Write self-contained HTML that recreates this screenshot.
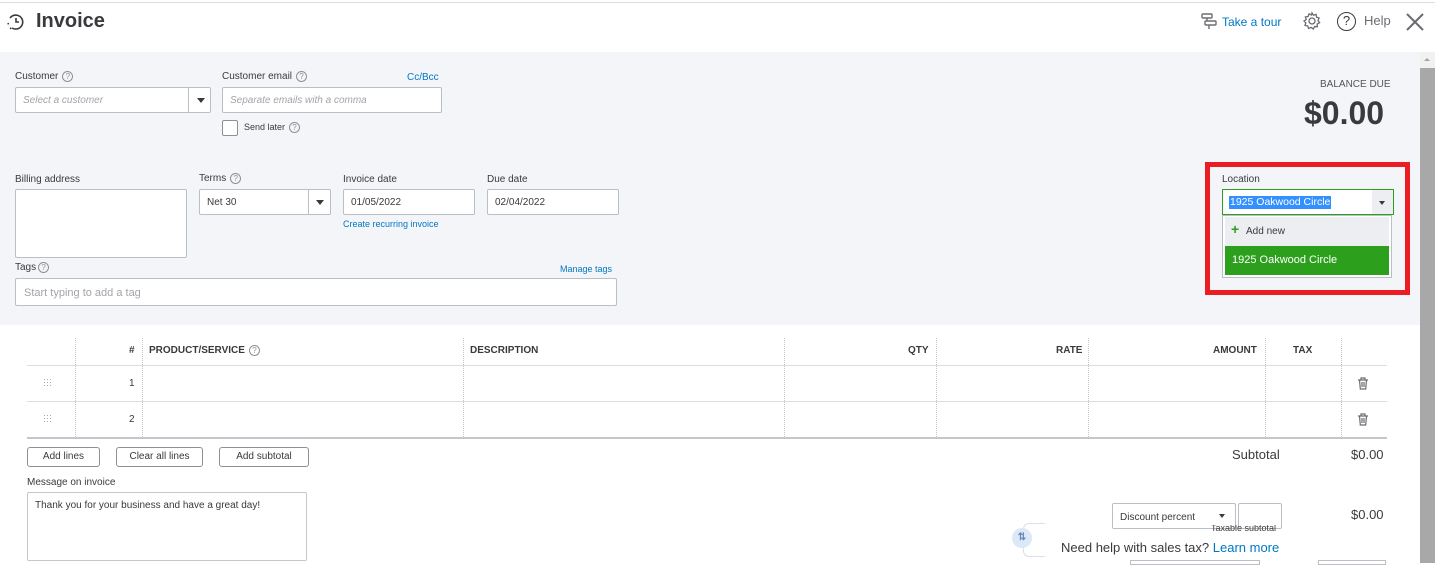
<!DOCTYPE html>
<html><head><meta charset="utf-8"><style>
*{box-sizing:border-box;margin:0;padding:0}
body{width:1435px;height:563px;overflow:hidden;background:#fff;font-family:"Liberation Sans",Arial,sans-serif;color:#393a3d;position:relative}
.a{position:absolute}
.lbl{font-size:10px;color:#393a3d}
.in{position:absolute;background:#fff;border:1px solid #babec5;border-radius:2px;font-size:10px}
.ph{color:#a0a4aa;font-style:italic}
.q{display:inline-block;width:11px;height:11px;border:1px solid #8d9096;border-radius:50%;font-size:8px;line-height:9px;text-align:center;color:#8d9096;vertical-align:middle;margin-left:4px}
.blue{color:#0077c5}
.th{position:absolute;top:345px;font-size:10px;font-weight:bold;color:#393a3d}
.vl{position:absolute;top:338px;height:99px;border-left:1px dotted #c4c6ca}
.btn{position:absolute;top:447px;height:20px;border:1px solid #8d9096;border-radius:3px;background:#fff;font-size:10px;text-align:center;line-height:18px}
</style></head><body>
<div class="a" style="left:0;top:2px;width:1435px;height:1px;background:#dcdcdc"></div>
<svg class="a" style="left:6px;top:12px" width="20" height="20" viewBox="0 0 20 20" fill="none" stroke="#393a3d" stroke-width="1.6"><path d="M4 6 A7 7 0 1 1 6 16" /><path d="M10 6v4h3"/><path d="M2 11l1 3M4 16l2 1" stroke-dasharray="1.5 1.5"/></svg>
<div class="a" style="left:36px;top:10px;font-size:20px;font-weight:bold;color:#393a3d">Invoice</div>
<svg class="a" style="left:1200px;top:12px" width="18" height="18" viewBox="0 0 18 18" fill="none" stroke="#6b6c72" stroke-width="1.4"><rect x="2" y="2" width="10" height="4" rx="1"/><rect x="5" y="9" width="11" height="4" rx="1"/><path d="M7 6v3M9 13v4"/></svg>
<div class="a blue" style="left:1222px;top:15px;font-size:12px">Take a tour</div>
<svg class="a" style="left:1302px;top:11px" width="20" height="20" viewBox="0 0 20 20" fill="none" stroke="#6b6c72" stroke-width="1.3"><circle cx="10" cy="10" r="3"/><path d="M10 2l1.5 2.2 2.6-.8.4 2.7 2.6.9-1.1 2.5 1.6 2.2-2.4 1.3.1 2.7-2.7-.1-1.3 2.4-2.2-1.6-2.5 1.1-.9-2.6-2.7-.4.8-2.6L2 10l2.2-1.5-.8-2.6 2.7-.4.9-2.6 2.5 1.1z"/></svg>
<div class="a" style="left:1337px;top:12px;width:19px;height:19px;border:1.5px solid #393a3d;border-radius:50%;font-size:13px;text-align:center;line-height:16px;color:#393a3d">?</div>
<div class="a" style="left:1364px;top:13px;font-size:13px;color:#6b6c72">Help</div>
<svg class="a" style="left:1405px;top:12px" width="20" height="20" viewBox="0 0 20 20" stroke="#6b6c72" stroke-width="2"><path d="M2 2l16 16M18 2L2 18"/></svg>

<div class="a" style="left:0;top:52px;width:1420px;height:273px;background:#f4f5f8"></div>
<div class="a" style="left:1420px;top:52px;width:15px;height:511px;background:#f1f1f1"></div>
<div class="a" style="left:1420px;top:68px;width:15px;height:495px;background:#a8a8a8"></div>
<div class="a" style="left:1424px;top:58px;width:0;height:0;border-left:3px solid transparent;border-right:3px solid transparent;border-bottom:3px solid #a3a3a3"></div>

<div class="a lbl" style="left:15px;top:71px">Customer<span class="q">?</span></div>
<div class="in" style="left:15px;top:87px;width:196px;height:26px"><span class="ph a" style="left:7px;top:7px">Select a customer</span><div class="a" style="left:172px;top:0;height:24px;border-left:1px solid #babec5;width:1px"></div><div class="a" style="left:181px;top:10px;border-left:4px solid transparent;border-right:4px solid transparent;border-top:5px solid #393a3d"></div></div>
<div class="a lbl" style="left:222px;top:71px">Customer email<span class="q">?</span></div>
<div class="a blue" style="left:407px;top:72px;font-size:10px">Cc/Bcc</div>
<div class="in" style="left:222px;top:87px;width:220px;height:26px"><span class="ph a" style="left:7px;top:7px">Separate emails with a comma</span></div>
<div class="a" style="left:222px;top:120px;width:16px;height:16px;border:1px solid #8d9096;background:#fff;border-radius:2px"></div>
<div class="a" style="left:244px;top:122px;font-size:9px">Send later<span class="q">?</span></div>

<div class="a" style="left:1320px;top:79px;font-size:10px;color:#555">BALANCE DUE</div>
<div class="a" style="left:1304px;top:95px;font-size:32px;font-weight:bold;color:#393a3d">$0.00</div>

<div class="a lbl" style="left:15px;top:174px">Billing address</div>
<div class="in" style="left:15px;top:189px;width:172px;height:69px"></div>
<div class="a lbl" style="left:199px;top:173px">Terms<span class="q">?</span></div>
<div class="in" style="left:199px;top:189px;width:132px;height:26px"><span class="a" style="left:7px;top:7px">Net 30</span><div class="a" style="left:108px;top:0;height:24px;border-left:1px solid #babec5"></div><div class="a" style="left:116px;top:10px;border-left:4px solid transparent;border-right:4px solid transparent;border-top:5px solid #393a3d"></div></div>
<div class="a lbl" style="left:343px;top:174px">Invoice date</div>
<div class="in" style="left:343px;top:189px;width:132px;height:26px"><span class="a" style="left:7px;top:7px">01/05/2022</span></div>
<div class="a blue" style="left:343px;top:219px;font-size:9px">Create recurring invoice</div>
<div class="a lbl" style="left:487px;top:174px">Due date</div>
<div class="in" style="left:487px;top:189px;width:132px;height:26px"><span class="a" style="left:7px;top:7px">02/04/2022</span></div>
<div class="a lbl" style="left:15px;top:262px">Tags<span class="q" style="margin-left:2px">?</span></div>
<div class="a blue" style="left:560px;top:264px;font-size:9px">Manage tags</div>
<div class="in" style="left:15px;top:278px;width:602px;height:28px"><span class="a" style="left:8px;top:8px;color:#a0a4aa;font-size:11px">Start typing to add a tag</span></div>

<div class="a" style="left:1205px;top:162px;width:205px;height:133px;border:5px solid #ec1c24;background:#f4f5f8"></div>
<div class="a lbl" style="left:1222px;top:174px">Location</div>
<div class="a" style="left:1222px;top:189px;width:172px;height:26px;border:1px solid #2ca01c;background:#fff"></div>
<div class="a" style="left:1372px;top:190px;width:21px;height:24px;background:#eceef1"></div>
<div class="a" style="left:1379px;top:201px;border-left:3px solid transparent;border-right:3px solid transparent;border-top:4px solid #393a3d"></div>
<div class="a" style="left:1229px;top:196px;background:#3390ff;color:#fff;font-size:10.5px;padding:0 1px;line-height:13px">1925 Oakwood Circle</div>
<div class="a" style="left:1222px;top:215px;width:170px;height:63px;border:1px solid #babec5;background:#fff"></div>
<div class="a" style="left:1225px;top:217px;width:164px;height:29px;background:#eceef1"></div>
<div class="a" style="left:1231px;top:223px;color:#2ca01c;font-size:14px;font-weight:bold;line-height:12px">+</div>
<div class="a" style="left:1246px;top:226px;font-size:10px;color:#393a3d">Add new</div>
<div class="a" style="left:1225px;top:246px;width:164px;height:29px;background:#2ca01c;color:#fff;font-size:11px;padding:8px 0 0 7px">1925 Oakwood Circle</div>

<div class="a" style="left:27px;top:365px;width:1360px;height:1px;background:#dcdcdc"></div>
<div class="a" style="left:27px;top:401px;width:1360px;height:1px;background:#dcdcdc"></div>
<div class="a" style="left:27px;top:437px;width:1360px;height:2px;background:#c4c6ca"></div>
<div class="vl" style="left:75px"></div><div class="vl" style="left:142px"></div><div class="vl" style="left:463px"></div><div class="vl" style="left:784px"></div><div class="vl" style="left:936px"></div><div class="vl" style="left:1088px"></div><div class="vl" style="left:1265px"></div><div class="vl" style="left:1341px"></div>
<div class="th" style="left:129px">#</div>
<div class="th" style="left:149px">PRODUCT/SERVICE<span class="q" style="font-weight:normal">?</span></div>
<div class="th" style="left:470px">DESCRIPTION</div>
<div class="th" style="left:908px">QTY</div>
<div class="th" style="left:1056px">RATE</div>
<div class="th" style="left:1213px">AMOUNT</div>
<div class="th" style="left:1293px">TAX</div>
<svg class="a" style="left:44px;top:379px" width="8" height="8" viewBox="0 0 8 8" fill="#aaa"><rect x="0" y="0" width="1" height="1"/><rect x="3" y="0" width="1" height="1"/><rect x="6" y="0" width="1" height="1"/><rect x="0" y="3" width="1" height="1"/><rect x="3" y="3" width="1" height="1"/><rect x="6" y="3" width="1" height="1"/><rect x="0" y="6" width="1" height="1"/><rect x="3" y="6" width="1" height="1"/><rect x="6" y="6" width="1" height="1"/></svg>
<svg class="a" style="left:44px;top:415px" width="8" height="8" viewBox="0 0 8 8" fill="#aaa"><rect x="0" y="0" width="1" height="1"/><rect x="3" y="0" width="1" height="1"/><rect x="6" y="0" width="1" height="1"/><rect x="0" y="3" width="1" height="1"/><rect x="3" y="3" width="1" height="1"/><rect x="6" y="3" width="1" height="1"/><rect x="0" y="6" width="1" height="1"/><rect x="3" y="6" width="1" height="1"/><rect x="6" y="6" width="1" height="1"/></svg>
<div class="a" style="left:129px;top:378px;font-size:10px">1</div>
<div class="a" style="left:129px;top:414px;font-size:10px">2</div>
<svg class="a" style="left:1357px;top:377px" width="12" height="13" viewBox="0 0 12 13" fill="none" stroke="#6b6c72" stroke-width="1.2"><path d="M1 3h10M4 3V1h4v2M2.5 3l.8 9h5.4l.8-9M5 5v5M7 5v5"/></svg>
<svg class="a" style="left:1357px;top:413px" width="12" height="13" viewBox="0 0 12 13" fill="none" stroke="#6b6c72" stroke-width="1.2"><path d="M1 3h10M4 3V1h4v2M2.5 3l.8 9h5.4l.8-9M5 5v5M7 5v5"/></svg>

<div class="btn" style="left:27px;width:73px">Add lines</div>
<div class="btn" style="left:116px;width:87px">Clear all lines</div>
<div class="btn" style="left:219px;width:90px">Add subtotal</div>
<div class="a" style="left:1232px;top:447px;font-size:13px">Subtotal</div>
<div class="a" style="left:1351px;top:447px;font-size:13px">$0.00</div>
<div class="a lbl" style="left:27px;top:477px">Message on invoice</div>
<div class="in" style="left:27px;top:492px;width:280px;height:69px;border-color:#c4c6ca"><span class="a" style="left:7px;top:7px">Thank you for your business and have a great day!</span></div>

<div class="in" style="left:1112px;top:503px;width:124px;height:26px"><span class="a" style="left:7px;top:8px">Discount percent</span><div class="a" style="left:106px;top:10px;border-left:3px solid transparent;border-right:3px solid transparent;border-top:4px solid #393a3d"></div></div>
<div class="in" style="left:1238px;top:503px;width:44px;height:26px"></div>
<div class="a" style="left:1211px;top:525px;font-size:9px;height:7px;overflow:hidden;color:#393a3d;line-height:6px">Taxable subtotal</div>
<div class="a" style="left:1351px;top:507px;font-size:13px">$0.00</div>
<div class="a" style="left:1023px;top:523px;width:22px;height:34px;border:1px solid #dde;border-right:none;border-radius:6px 0 0 6px"></div>
<div class="a" style="left:1012px;top:528px;width:20px;height:20px;border-radius:50%;background:#dbe8f8;color:#6a8bb5;font-size:10px;text-align:center;line-height:20px;font-weight:bold">⇅</div>
<div class="a" style="left:1061px;top:540px;font-size:13px;color:#393a3d">Need help with sales tax? <span class="blue">Learn more</span></div>
<div class="a" style="left:1130px;top:560px;width:130px;height:5px;border:1px solid #babec5"></div>
<div class="a" style="left:1318px;top:560px;width:68px;height:5px;border:1px solid #babec5"></div>
</body></html>
